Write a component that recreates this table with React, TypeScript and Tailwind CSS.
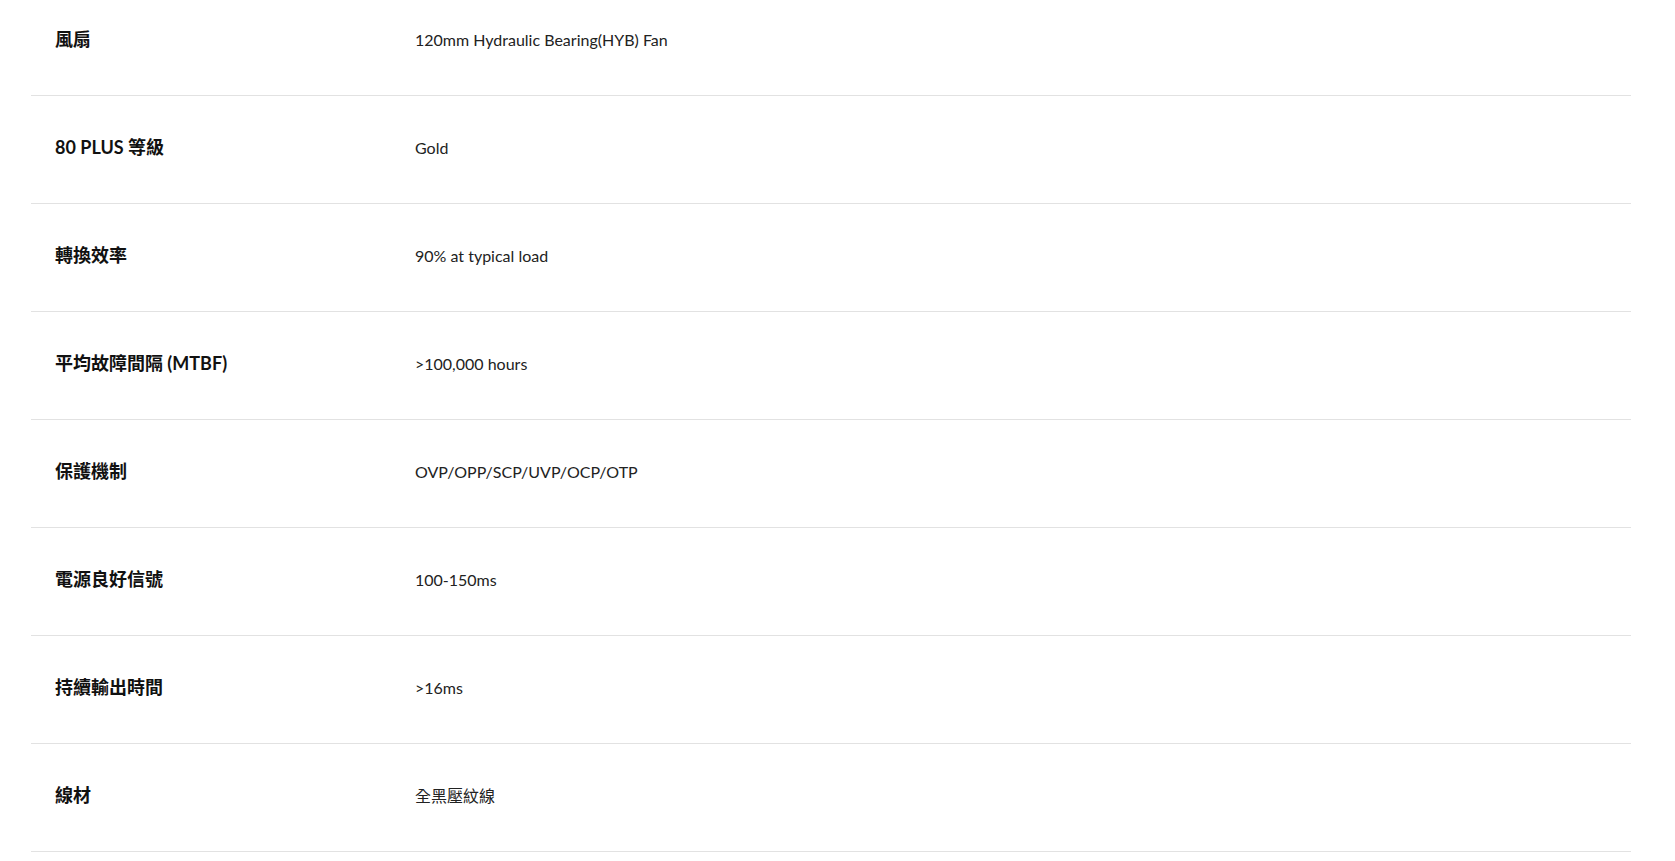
import React from 'react';

const specs: { label: string; value: string }[] = [
  { label: '風扇', value: '120mm Hydraulic Bearing(HYB) Fan' },
  { label: '80 PLUS 等級', value: 'Gold' },
  { label: '轉換效率', value: '90% at typical load' },
  { label: '平均故障間隔 (MTBF)', value: '>100,000 hours' },
  { label: '保護機制', value: 'OVP/OPP/SCP/UVP/OCP/OTP' },
  { label: '電源良好信號', value: '100-150ms' },
  { label: '持續輸出時間', value: '>16ms' },
  { label: '線材', value: '全黑壓紋線' },
];

export default function App() {
  return (
    <div
      className="min-h-screen bg-white overflow-hidden"
      style={{ fontFamily: 'Lato, "Noto Sans CJK TC", sans-serif' }}
    >
      <div className="ml-[31px] w-[1600px] -mt-[12px]">
        {specs.map((s) => (
          <div
            key={s.label}
            className="grid grid-cols-[384px_1fr] items-center h-[108px] pb-1 border-b border-[#e2e2e2]"
          >
            <div className="pl-6 text-[18px] font-bold text-[#111]">{s.label}</div>
            <div className="text-[16px] text-[#222]">{s.value}</div>
          </div>
        ))}
      </div>
    </div>
  );
}
